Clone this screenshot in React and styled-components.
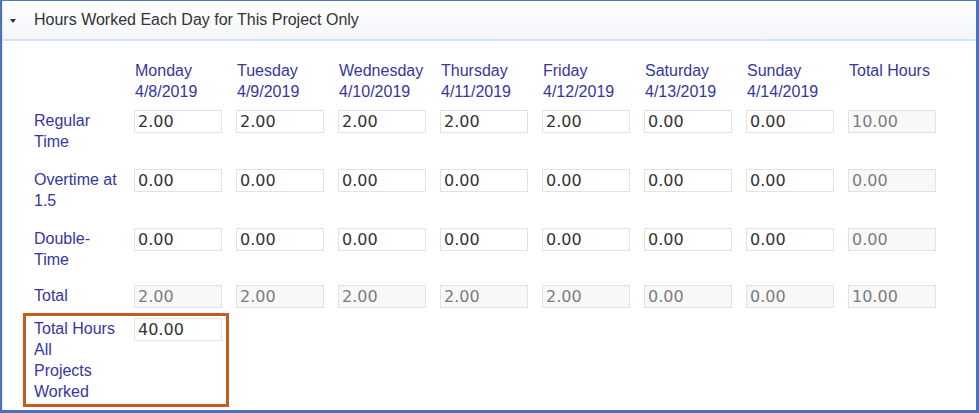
import React from "react";
import styled, { createGlobalStyle } from "styled-components";

const GlobalStyle = createGlobalStyle`
  html, body { margin: 0; padding: 0; background: #ffffff; }
  body { font-family: "Liberation Sans", Arial, sans-serif; }
`;

const Frame = styled.div`
  width: 979px;
  height: 413px;
  box-sizing: border-box;
  border-top: 1px solid #5577b8;
  border-left: 2px solid #4a72c2;
  border-right: 3px solid #4a72c2;
  border-bottom: 3px solid #4a72c2;
  overflow: hidden;
  background: #fff;
`;

const Panel = styled.div`
  height: 100%;
  box-sizing: border-box;
  border-left: 1px solid #e2e6ea;
`;

const Header = styled.div`
  height: 38px;
  display: flex;
  align-items: center;
  padding-left: 7px;
  background: linear-gradient(#ffffff, #f3f6f9);
  border-bottom: 2px solid #d6e4f4;
  color: #333333;
  font-size: 16px;
`;

const Caret = styled.span`
  width: 0;
  height: 0;
  border-left: 3px solid transparent;
  border-right: 3px solid transparent;
  border-top: 4px solid #333;
  margin-right: 18px;
  margin-top: 1px;
`;

const Body = styled.div`
  padding: 19px 0 0 31px;
`;

const Row = styled.div`
  display: grid;
  grid-template-columns: 100px repeat(8, 102px);
  align-items: start;
  margin-bottom: ${(p) => p.$gap || 0}px;
`;

const ColHead = styled.div`
  color: #36369f;
  font-size: 16px;
  line-height: 21px;
  padding-left: 1px;
`;

const Label = styled.div`
  color: #36369f;
  font-size: 16px;
  line-height: 21px;
  width: 88px;
`;

const Field = styled.input`
  box-sizing: border-box;
  width: 88px;
  height: 23px;
  margin: 0;
  padding: 0 3px;
  border: 1px solid #e2e2e2;
  border-radius: 0;
  outline: none;
  font-family: "DejaVu Sans", Verdana, sans-serif;
  font-size: 16px;
  color: ${(p) => (p.disabled ? "#7c7c7c" : "#333333")};
  background: ${(p) => (p.disabled ? "#f8f8f8" : "#ffffff")};
  -webkit-text-fill-color: ${(p) => (p.disabled ? "#7c7c7c" : "#333333")};
  opacity: 1;
`;

const Highlight = styled.div`
  display: grid;
  grid-template-columns: 100px 88px;
  align-items: start;
  width: 206px;
  box-sizing: border-box;
  margin-left: -11px;
  border: 3px solid #c75a1e;
  padding: 2px 4px 2px 8px;
`;

const days = [
  ["Monday", "4/8/2019"],
  ["Tuesday", "4/9/2019"],
  ["Wednesday", "4/10/2019"],
  ["Thursday", "4/11/2019"],
  ["Friday", "4/12/2019"],
  ["Saturday", "4/13/2019"],
  ["Sunday", "4/14/2019"],
];

const rows = [
  { label: "Regular Time", values: ["2.00", "2.00", "2.00", "2.00", "2.00", "0.00", "0.00"], total: "10.00", gap: 17 },
  { label: "Overtime at 1.5", values: ["0.00", "0.00", "0.00", "0.00", "0.00", "0.00", "0.00"], total: "0.00", gap: 17 },
  { label: "Double-Time", values: ["0.00", "0.00", "0.00", "0.00", "0.00", "0.00", "0.00"], total: "0.00", gap: 15 },
];

const totals = ["2.00", "2.00", "2.00", "2.00", "2.00", "0.00", "0.00"];

export default function App() {
  return (
    <>
      <GlobalStyle />
      <Frame>
        <Panel>
          <Header>
            <Caret />
            Hours Worked Each Day for This Project Only
          </Header>
          <Body>
            <Row $gap={8}>
              <div />
              {days.map(([d, date]) => (
                <ColHead key={d}>
                  {d}
                  <br />
                  {date}
                </ColHead>
              ))}
              <ColHead>Total Hours</ColHead>
            </Row>
            {rows.map((r) => (
              <Row key={r.label} $gap={r.gap}>
                <Label>{r.label}</Label>
                {r.values.map((v, i) => (
                  <Field key={i} readOnly value={v} />
                ))}
                <Field disabled value={r.total} />
              </Row>
            ))}
            <Row $gap={5}>
              <Label>Total</Label>
              {totals.map((v, i) => (
                <Field key={i} disabled value={v} />
              ))}
              <Field disabled value="10.00" />
            </Row>
            <Highlight>
              <Label>
                Total Hours
                <br />
                All
                <br />
                Projects
                <br />
                Worked
              </Label>
              <Field readOnly value="40.00" />
            </Highlight>
          </Body>
        </Panel>
      </Frame>
    </>
  );
}
